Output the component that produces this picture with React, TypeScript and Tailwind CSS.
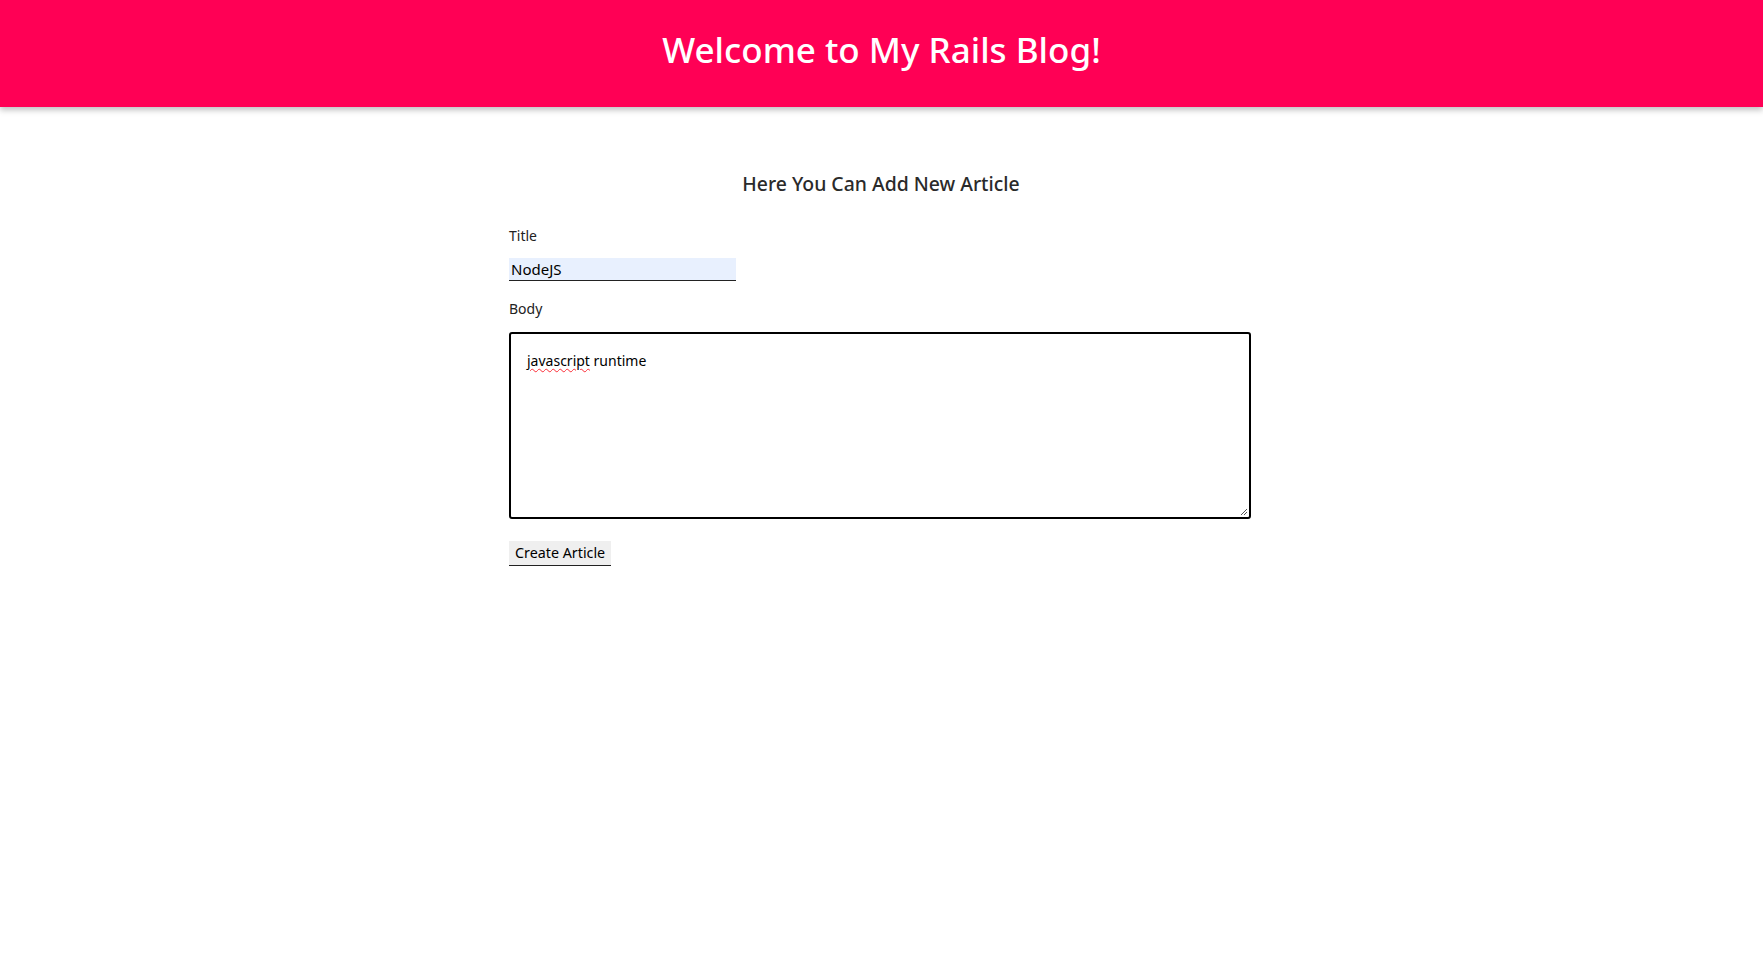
import React from 'react';

const font = { fontFamily: '"Noto Sans", "Open Sans", sans-serif' };

export default function App() {
  return (
    <div className="min-h-screen bg-white text-[#222]" style={font}>
      {/* Header */}
      <header className="flex h-[107px] items-center justify-center bg-[#ff0055] pb-[7px] shadow-[0_3px_6px_rgba(0,0,0,0.25)]">
        <h1 className="text-[35px] font-medium text-white">Welcome to My Rails Blog!</h1>
      </header>

      {/* Form */}
      <main className="mx-auto w-[745px] pr-[3px] pt-[63px]">
        <h2 className="pl-[2px] text-center text-[19.4px] leading-[28px] font-medium text-[#2a2a2a]">
          Here You Can Add New Article
        </h2>

        <label className="mt-[28px] block text-[14px] leading-[20px] text-[#222]">Title</label>
        <input
          readOnly
          value="NodeJS"
          className="mt-[12px] block h-[23px] w-[227px] border-b border-[#222] bg-[#e8f0fe] px-[2px] text-[15px] text-black outline-none"
        />

        <label className="mt-[18px] block text-[14px] leading-[20px] text-[#222]">Body</label>
        <div className="relative mt-[13px] h-[187px] w-full rounded-[3px] border-2 border-black px-[16px] pt-[16px] text-[14px] leading-[22px] text-black">
          <span className="underline decoration-red-500 decoration-wavy decoration-1 underline-offset-2">
            javascript
          </span>{' '}
          runtime
          <svg className="absolute right-[1px] bottom-[1px]" width="8" height="8" viewBox="0 0 8 8">
            <path d="M7 1L1 7M7 4L4 7" stroke="#555" strokeWidth="1" />
          </svg>
        </div>

        <button className="mt-[22px] block h-[25px] border-b border-[#222] bg-[#efefef] px-[6px] text-[14.3px] text-black">
          Create Article
        </button>
      </main>
    </div>
  );
}
